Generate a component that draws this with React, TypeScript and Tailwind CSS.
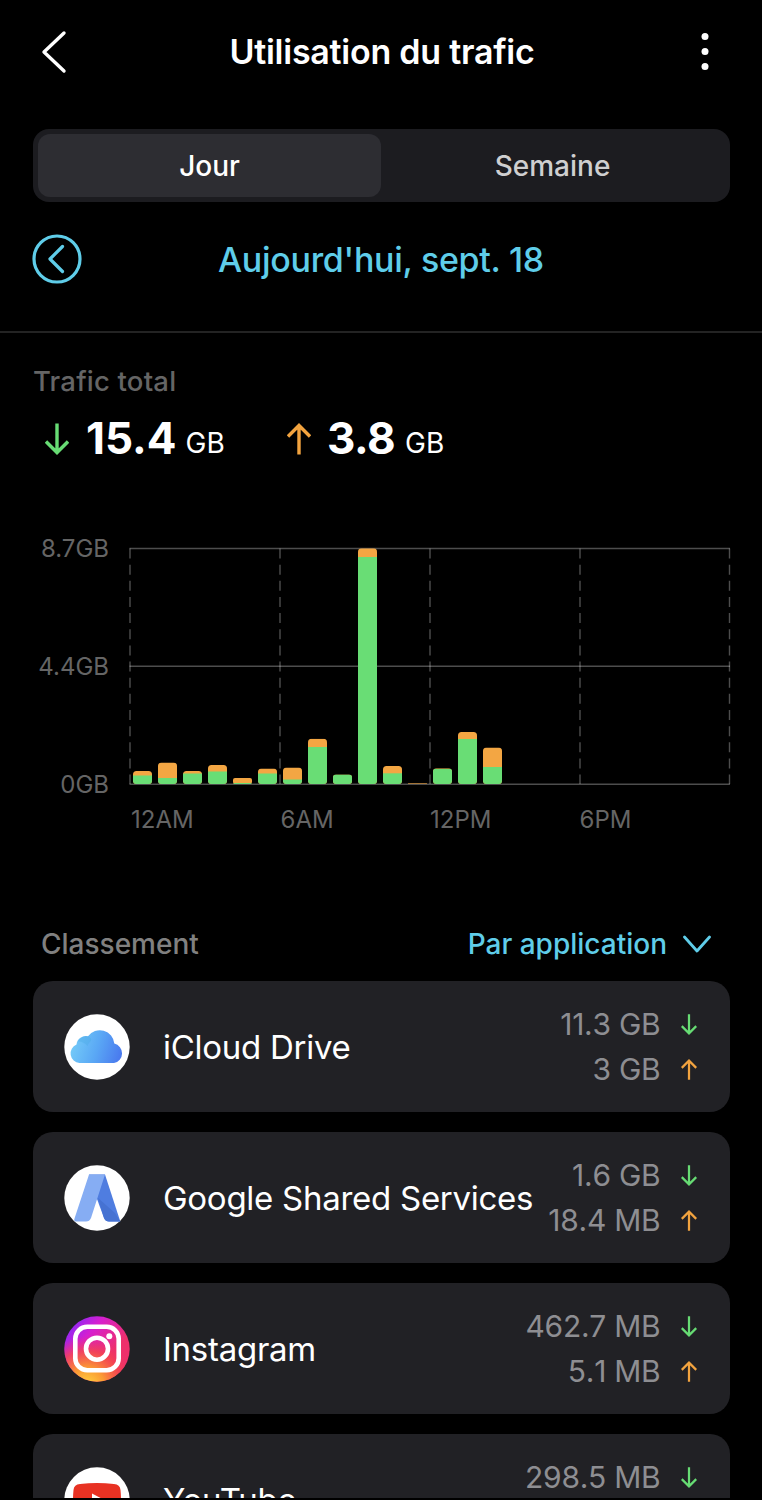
import React from 'react';

const HOURS = [
  { total: 13, down: 8.5 },
  { total: 21.5, down: 6 },
  { total: 13, down: 10.5 },
  { total: 19, down: 12.5 },
  { total: 6, down: 1 },
  { total: 15.5, down: 10.5 },
  { total: 16.5, down: 4.5 },
  { total: 45.3, down: 37 },
  { total: 9.5, down: 9.5 },
  { total: 235.7, down: 227 },
  { total: 18, down: 10.7 },
  { total: 0.8, down: 0 },
  { total: 15.7, down: 15.1 },
  { total: 52, down: 45 },
  { total: 36.5, down: 17 },
];

const DownArrow = ({ className }: { className: string }) => (
  <svg viewBox="0 0 24 32" className={className} fill="none" stroke="#67dc74" strokeWidth="3.4">
    <path d="M12 .5V29.5M1 18.5l11 11 11-11" />
  </svg>
);

const UpArrow = ({ className }: { className: string }) => (
  <svg viewBox="0 0 24 32" className={className} fill="none" stroke="#f2a33f" strokeWidth="3.4">
    <path d="M12 31.5V2.5M1 13.5l11-11 11 11" />
  </svg>
);

const ICloudIcon = () => (
  <svg viewBox="0 0 66 66" className="size-[66px]">
    <defs>
      <linearGradient id="cloud" x1="0" y1="0.5" x2="1" y2="0.7">
        <stop offset="0" stopColor="#74cbf8" />
        <stop offset="0.5" stopColor="#5aa8f5" />
        <stop offset="1" stopColor="#4979ee" />
      </linearGradient>
    </defs>
    <circle cx="33" cy="33" r="32.7" fill="#fff" />
    <path d="M15.500 49a9.700 9.700 0 0 1-3-18.600A9.500 9.500 0 0 1 24 22.300A14.500 14.500 0 0 1 50.300 29.600A9.900 9.900 0 0 1 50 49z" fill="url(#cloud)" />
    <path d="M14 27.500A9 9 0 0 1 24 22.300Q28 24 27 27Q24 29 23.500 32Q19 27 14 27.500z" fill="#4ba9e6" opacity=".4" />
  </svg>
);

const GoogleIcon = () => (
  <svg viewBox="0 0 66 66" className="size-[66px]">
    <circle cx="33" cy="33" r="32.7" fill="#fff" />
    <path d="M25 9.500H41L56.300 56.500H45Q41.500 56.500 40 53L33 34z" fill="#4f7de0" />
    <path d="M34 33L51 48L56.300 56.500H45Q41.500 56.500 40 53z" fill="#4672d2" />
    <path d="M25 9.500H41L27 53Q25.500 56.500 22 56.500H12Q9.500 56.500 10.500 53.500L24.200 12z" fill="#86adf3" />
  </svg>
);

const InstagramIcon = () => (
  <svg viewBox="0 0 66 66" className="size-[66px]">
    <defs>
      <linearGradient id="igBase" x1="0.1" y1="0" x2="0.75" y2="0.55">
        <stop offset="0" stopColor="#7a2bff" />
        <stop offset="0.45" stopColor="#d61fd0" />
        <stop offset="1" stopColor="#ee2f6b" />
      </linearGradient>
      <radialGradient id="igWarm" cx="0.35" cy="1.05" r="0.75">
        <stop offset="0" stopColor="#ffd43e" />
        <stop offset="0.35" stopColor="#fb9a34" />
        <stop offset="0.7" stopColor="#f5484b" stopOpacity="0.8" />
        <stop offset="1" stopColor="#ee2f6b" stopOpacity="0" />
      </radialGradient>
    </defs>
    <circle cx="33" cy="33" r="32.7" fill="url(#igBase)" />
    <circle cx="33" cy="33" r="32.7" fill="url(#igWarm)" />
    <g fill="none" stroke="#fff" strokeWidth="4.600">
      <rect x="11.300" y="10.800" width="43.400" height="43.400" rx="12" />
      <circle cx="33" cy="32.700" r="11" />
    </g>
    <circle cx="45.300" cy="20.300" r="3" fill="#fff" />
  </svg>
);

const YouTubeIcon = () => (
  <svg viewBox="0 0 66 66" className="size-[66px]">
    <circle cx="33" cy="33" r="32.7" fill="#fff" />
    <path d="M16 17Q33 15 50 17Q56 17.300 56.500 23Q57.500 33 56.500 43Q56 49 50 49.500Q33 51 16 49.500Q10 49 9.500 43Q8.500 33 9.500 23Q10 17.300 16 17z" fill="#e83223" />
    <path d="M28 26.500L41 33.300L28 40z" fill="#fff" />
  </svg>
);

const APPS = [
  { name: 'iCloud Drive', icon: <ICloudIcon />, down: '11.3 GB', up: '3 GB' },
  { name: 'Google Shared Services', icon: <GoogleIcon />, down: '1.6 GB', up: '18.4 MB' },
  { name: 'Instagram', icon: <InstagramIcon />, down: '462.7 MB', up: '5.1 MB' },
  { name: 'YouTube', icon: <YouTubeIcon />, down: '298.5 MB', up: '' },
];

const Chart = () => (
  <div className="mt-[60px] flex h-[300px] text-2xl text-[#656565]">
    <div className="flex h-[273px] w-[109px] flex-col justify-between pt-px text-right leading-9">
      <span>8.7GB</span>
      <span>4.4GB</span>
      <span>0GB</span>
    </div>
    <div className="ml-5 w-[602px] pt-[17px]">
      <svg viewBox="0 0 602 238" className="block h-[238px] w-[602px]">
        <g stroke="#fff" strokeOpacity=".3" strokeWidth="1.400">
          <path d="M.5 1.500H601M.5 119.300H601M.5 237.200H601" />
          <path d="M1 1.500V237M151 1.500V237M301 1.500V237M451 1.500V237M600.500 1.500V237" strokeDasharray="10 6.150" />
        </g>
        {HOURS.map((hour, i) => (
          <g key={i}>
            <clipPath id={`bar${i}`}>
              <rect x={4 + i * 25} y={237 - hour.total} width="19" height={hour.total} rx={Math.min(3.5, hour.total / 3)} />
            </clipPath>
            <g clipPath={`url(#bar${i})`}>
              <rect x={4 + i * 25} y={237 - hour.total} width="19" height={hour.total} fill="#f3a643" />
              <rect x={4 + i * 25} y={237 - hour.down} width="19" height={hour.down} fill="#69dd75" />
            </g>
          </g>
        ))}
      </svg>
      <div className="mt-[17px] grid w-[600px] grid-cols-4 pl-[2px] leading-9">
        <span>12AM</span>
        <span>6AM</span>
        <span>12PM</span>
        <span>6PM</span>
      </div>
    </div>
  </div>
);

const App = () => (
  <div className="h-[1500px] w-[762px] overflow-hidden bg-black font-['Inter',sans-serif] text-white">
    <div className="h-[1498px] overflow-hidden">
      <header className="flex h-[103px] items-center justify-between pr-[53px] pl-10">
        <svg viewBox="0 0 28 44" className="h-11 w-7" fill="none" stroke="#fff" strokeWidth="3.400" strokeLinecap="round" strokeLinejoin="round">
          <path d="M24 3L4 22l20 19" />
        </svg>
        <h1 className="mr-[5px] text-[34px] font-semibold tracking-[-0.25px]">Utilisation du trafic</h1>
        <svg viewBox="0 0 8 40" className="h-10 w-2" fill="#fff">
          <circle cx="4" cy="4.500" r="3.500" />
          <circle cx="4" cy="19.500" r="3.500" />
          <circle cx="4" cy="34.500" r="3.500" />
        </svg>
      </header>

      <div className="mx-[32.5px] mt-[25.5px] flex h-[73.500px] rounded-2xl bg-[#1c1c20] p-[5.500px] text-[28px] font-medium">
        <div className="flex flex-1 items-center justify-center rounded-xl bg-[#2d2d32] pt-px">Jour</div>
        <div className="flex flex-1 items-center justify-center pt-px text-[#cfcfd0]">Semaine</div>
      </div>

      <div className="mt-8 flex h-[99px] items-start justify-between border-b-2 border-[#232323] px-8 text-[#5fcde9]">
        <svg viewBox="0 0 50 50" className="size-[50px]" fill="none" stroke="currentColor" strokeWidth="3.200">
          <circle cx="25" cy="25" r="23" />
          <path d="M30.500 12.500L18 25l12.500 12.500" strokeLinecap="round" strokeLinejoin="round" />
        </svg>
        <span className="text-[34px] leading-[52px] font-medium tracking-[-0.3px]">Aujourd'hui, sept. 18</span>
        <span className="w-[50px]" />
      </div>

      <div className="pt-[30px] pl-[33px]">
        <p className="text-[27.500px] leading-9 font-medium tracking-[0.2px] text-[#656565]">Trafic total</p>
        <div className="mt-[7px] flex h-[64px] items-center">
          <div className="flex w-[242px] items-center pl-3">
            <DownArrow className="mt-0.5 h-8 w-6" />
            <span className="ml-[17px] text-[44px] font-bold">15.4</span>
            <span className="mt-2.5 ml-[9px] text-[28px]">GB</span>
          </div>
          <div className="flex items-center pl-3">
            <UpArrow className="mt-0.5 h-8 w-6" />
            <span className="ml-[16px] text-[44px] font-bold tracking-[-0.5px]">3.8</span>
            <span className="mt-2.5 ml-[10px] text-[28px]">GB</span>
          </div>
        </div>
      </div>

      <Chart />

      <div className="mt-[94px] flex h-[57px] items-center justify-between pr-[51px] pb-[18px] pl-[41px] text-[28px] font-medium">
        <span className="text-[#808080]">Classement</span>
        <div className="flex items-center gap-[16px] text-[#5fcde9]">
          Par application
          <svg viewBox="0 0 28 18" className="h-[18px] w-7" fill="none" stroke="currentColor" strokeWidth="2.800" strokeLinecap="round" strokeLinejoin="round">
            <path d="M1.500 2L14 16 26.500 2" />
          </svg>
        </div>
      </div>

      <div className="flex flex-col gap-5 px-[32.5px]">
        {APPS.map((app) => (
          <div key={app.name} className="flex h-[131px] shrink-0 items-center rounded-[20px] bg-[#212125] pr-[33px] pl-[31.5px]">
            {app.icon}
            <span className="mt-0.5 ml-[33px] text-[33px] tracking-[-0.27px] whitespace-nowrap">{app.name}</span>
            <div className="ml-auto flex flex-col text-[30px] leading-[45px] tracking-[-0.25px] whitespace-nowrap text-[#8e8e92] [font-kerning:none]">
              <div className="flex h-[45px] items-center justify-end">
                {app.down}
                <DownArrow className="ml-[20px] h-[21px] w-4" />
              </div>
              <div className="flex h-[45px] items-center justify-end">
                {app.up}
                <UpArrow className="ml-[20px] h-[21px] w-4" />
              </div>
            </div>
          </div>
        ))}
      </div>
    </div>
  </div>
);

export default App;
